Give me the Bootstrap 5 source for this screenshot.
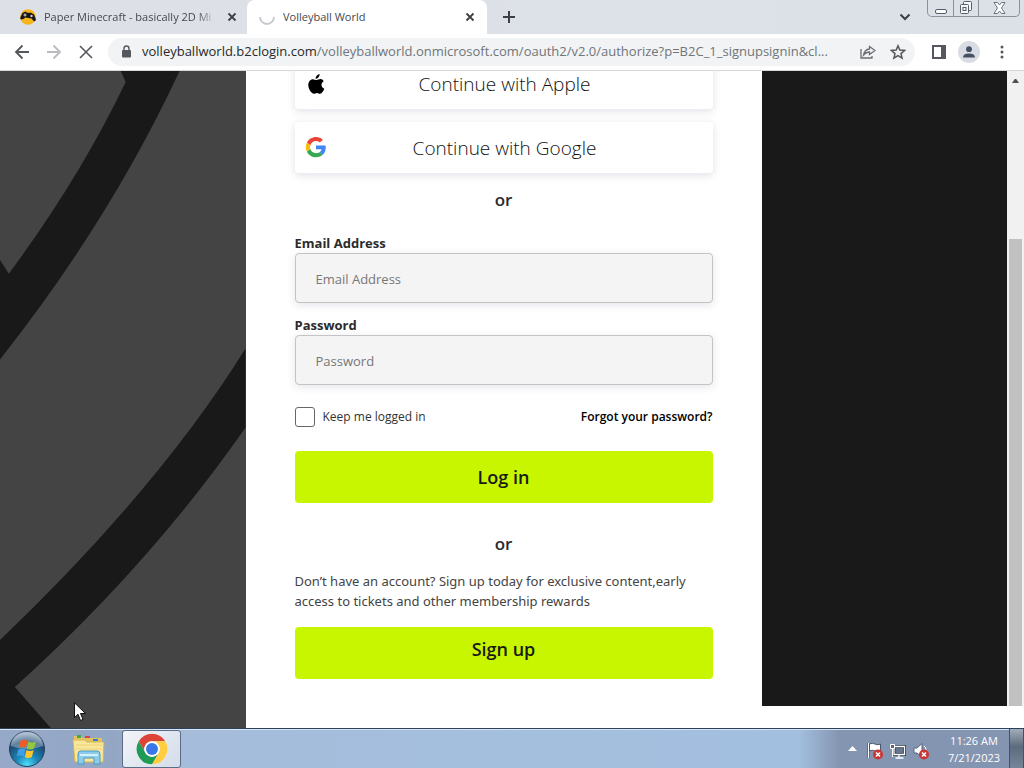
<!DOCTYPE html>
<html lang="en">
<head>
<meta charset="utf-8">
<meta name="viewport" content="width=device-width, initial-scale=1">
<title>Volleyball World</title>
<link href="https://cdn.jsdelivr.net/npm/bootstrap@5.3.0/dist/css/bootstrap.min.css" rel="stylesheet">
<style>
  body { font-family: "Open Sans", "Noto Sans", sans-serif; font-size: 13px; color: #333; background: #fff; }
  button { font-family: inherit; }
  svg { display: block; flex: none; }
  .bare { border: 0; background: none; padding: 0; color: inherit; }

  /* tab strip */
  .tabstrip { height: 34px; background: linear-gradient(90deg, #dee0e7, #dce1e8); font-size: 11px; color: #45494d; }
  .tab { width: 240px; height: 34px; gap: 8px; }
  .tab-idle { padding: 0 8px 0 20px; width: 247px; }
  .tab-idle .tab-title { -webkit-mask-image: linear-gradient(90deg, #000 88%, transparent); mask-image: linear-gradient(90deg, #000 88%, transparent); }
  .tab-live { background: #fff; border-radius: 8px 8px 0 0; padding: 0 10px 0 12px; }
  .tab-title { flex: 1; overflow: hidden; white-space: nowrap; }
  .winbtns { height: 17px; border: 1px solid #8a929c; border-top: 0; border-radius: 0 0 5px 5px; margin-right: 4px; }
  .winbtns button { width: 25px; display: flex; align-items: center; justify-content: center; }
  .winbtns button + button { border-left: 1px solid #8a929c; }
  .winbtns button:last-child { width: 41px; }

  /* toolbar */
  .toolbar { height: 37px; background: #fff; border-bottom: 1px solid #d6d8da; padding: 0 16px 0 14px; color: #55595e; }
  .omnibox { height: 28px; border-radius: 14px; background: #f1f3f4; padding: 0 5px 0 12px; margin: 0 17px 0 14px; gap: 10px; min-width: 0; }
  .address { font-size: 13px; color: #70757a; white-space: nowrap; overflow: hidden; text-overflow: ellipsis; }
  .address b { font-weight: 400; color: #26292c; }
  .avatar { width: 22px; height: 22px; border-radius: 50%; background: #d9dde3; margin-left: 12px; }

  /* page */
  .view { min-height: 0; overflow: hidden; }
  .side { flex: 1 1 0; min-width: 0; background: #444; }
  .side svg { width: 100%; height: 100%; }
  .panel { width: 516px; padding: 0 49px; background: #fff; }
  .dark { background: #191919; }
  .rest { height: 22px; }
  .social { height: 51px; border-radius: 4px; background: #fff; box-shadow: 0 2px 9px rgba(40,40,90,.15); font-size: 19px; font-weight: 300; color: #111; padding: 0 10px; margin-bottom: 13px; }
  .social.first { margin-top: -13px; }
  .social span { flex: 1; padding: 2px 20px 0 0; }
  .or { font-size: 17px; line-height: 28px; font-weight: 600; text-align: center; color: #2a2a2a; margin: 0; }
  .or-signup { margin-top: 27px; }
  .field-label { display: block; font-size: 13px; line-height: 20px; font-weight: 700; color: #2b2b2b; margin: 19px 0 0; }
  .field + .field-label { margin-top: 12px; }
  .field { height: 50px; font-size: 13px; padding: 2px 20px 0; background: #f4f4f4; border: 1px solid #c4c4c4; border-radius: 4px; box-shadow: 0 2px 8px rgba(40,40,90,.12); }
  .field::placeholder { color: #777; }
  .keep { width: 20px; height: 20px; margin: 0; border: 1px solid #666; border-radius: 3px; }
  .options { font-size: 12px; line-height: 20px; margin: 22px 0 24px; }
  .options a { font-weight: 600; }
  .lime { height: 52px; border-radius: 4px; background: #c8f500; font-size: 18px; font-weight: 600; color: #171b12; }
  .note { font-family: "Noto Sans", "Open Sans", sans-serif; font-size: 13px; line-height: 20px; color: #444; margin: 13px 0 16px; }

  /* scrollbar */
  .scroller { width: 17px; background: #f1f1f1; }
  .thumb { margin: 150px 2px 0; background: #c1c1c1; flex: 1; }

  /* taskbar */
  .taskbar { height: 40px; border-top: 1px solid #2c425c; box-shadow: inset 0 1px #dbe6f3; background: linear-gradient(90deg, #96a9c8 0, #93a6c4 115px, #a5bddb 185px, #a3bfdf 78%, #8495b1 82%, #8495b1); }
  .task-live { width: 59px; height: 38px; margin-top: 1px; border: 1px solid #5a6c87; border-radius: 3px; background: linear-gradient(135deg, #f2f5f9, #d3dce9); }
  .clock { width: 70px; font-size: 11px; line-height: 17px; color: #fff; text-align: center; white-space: nowrap; }
  .peek { width: 15px; align-self: stretch; border: 1px solid #44536a; border-width: 0 1px; background: linear-gradient(#a3acb9, #5d6b7e 45%, #77859a); }
  .pointer { left: 74px; top: 702px; pointer-events: none; }
</style>
</head>
<body class="vh-100 d-flex flex-column overflow-hidden">

<header>
  <div class="tabstrip d-flex">
    <div class="tab tab-idle d-flex align-items-center">
      <svg width="16" height="16" viewBox="0 0 16 16"><circle cx="8" cy="8" r="7.800" fill="#f6b51b"/><path d="M2.500 4 5.500 2.500l1 1 3 .5 1-.5L14 5.500l1.800 4.500q.2 2-1 2.200-1.500 0-3.300-2.700l-6-1Q3 10.500 1.500 10.500 0 10.500 .3 8.500z" fill="#161616"/><path d="M3.500 6h3M5 4.500v3" stroke="#ddd" stroke-width="1"/><circle cx="11.500" cy="7" r="1.200" fill="#ccc"/></svg>
      <span class="tab-title">Paper Minecraft - basically 2D Mi</span>
      <button class="bare" aria-label="Close tab"><svg width="14" height="14" viewBox="0 0 14 14" stroke="#3c4043" stroke-width="1.800"><path d="m3.500 3.500 7 7m0-7-7 7"/></svg></button>
    </div>
    <div class="tab tab-live d-flex align-items-center">
      <svg width="16" height="16" viewBox="0 0 16 16" fill="none" stroke="#c5c9cf" stroke-width="1.800"><path d="M1 8a7 7 0 0 0 14 0"/></svg>
      <span class="tab-title">Volleyball World</span>
      <button class="bare" aria-label="Close tab"><svg width="14" height="14" viewBox="0 0 14 14" stroke="#3c4043" stroke-width="1.800"><path d="m3.500 3.500 7 7m0-7-7 7"/></svg></button>
    </div>
    <button class="bare ms-3" aria-label="New tab"><svg width="12" height="12" viewBox="0 0 12 12" stroke="#3c4043" stroke-width="2"><path d="M6 0v12M0 6h12"/></svg></button>
    <button class="bare ms-auto me-3" aria-label="Search tabs"><svg width="12" height="8" viewBox="0 0 12 8" fill="none" stroke="#3c4043" stroke-width="2"><path d="m1.500 1.500 4.500 4.500 4.500-4.500"/></svg></button>
    <div class="winbtns d-flex">
      <button class="bare" aria-label="Minimize"><svg width="12" height="14" viewBox="0 0 12 14" fill="#fff" stroke="#555d68"><rect x=".5" y="8.500" width="11" height="4" rx="1.500"/></svg></button>
      <button class="bare" aria-label="Restore"><svg width="14" height="14" viewBox="0 0 14 14" fill="#f4f6f8" stroke="#555d68"><rect x="4.500" y=".5" width="8" height="9" rx="1"/><rect x="1.500" y="3.500" width="8" height="9" rx="1"/><rect x="4" y="6.500" width="3" height="3"/></svg></button>
      <button class="bare" aria-label="Close"><svg width="13" height="12" viewBox="0 0 13 12" fill="#fff" stroke="#69717c"><path d="M1 .5h3.500l2 2.500 2-2.500H12L8.500 6l3.500 5.500H8.500l-2-2.500-2 2.500H1L4.500 6z"/></svg></button>
    </div>
  </div>

  <div class="toolbar d-flex align-items-center">
    <button class="bare" aria-label="Back"><svg width="16" height="16" viewBox="0 0 16 16" fill="none" stroke="#54575b" stroke-width="1.800"><path d="M15 8H2m6.500-6.500L2 8l6.500 6.500"/></svg></button>
    <button class="bare ms-3" aria-label="Forward"><svg width="16" height="16" viewBox="0 0 16 16" fill="none" stroke="#b9bbbe" stroke-width="1.800"><path d="M1 8h13M7.500 1.500 14 8l-6.500 6.500"/></svg></button>
    <button class="bare ms-3" aria-label="Stop"><svg width="16" height="16" viewBox="0 0 16 16" stroke="#54575b" stroke-width="1.600"><path d="m2 2 12 12M14 2 2 14"/></svg></button>
    <div class="omnibox d-flex flex-fill align-items-center">
      <svg width="12" height="14" viewBox="0 0 12 14"><rect x="2" y="5" width="9" height="7.500" rx="1" fill="#54575b"/><path d="M4 5.500V3.500a2.500 2.500 0 0 1 5 0v2" fill="none" stroke="#54575b" stroke-width="1.400"/></svg>
      <div class="address flex-fill" role="textbox" aria-label="Address"><b>volleyballworld.b2clogin.com</b>/volleyballworld.onmicrosoft.com/oauth2/v2.0/authorize?p=B2C_1_signupsignin&amp;cl...</div>
      <button class="bare" aria-label="Share"><svg width="16" height="14" viewBox="0 0 16 14" fill="none" stroke="#6a6e73" stroke-width="1.300"><path d="M1 4v9h11v-2M9.500 1.500 15 5.500l-5.500 4V7Q6 7 3.500 10 4.500 4.500 9.500 4z"/></svg></button>
      <button class="bare ms-1 me-1" aria-label="Bookmark"><svg width="16" height="16" viewBox="0 0 16 16" fill="none" stroke="#54575b" stroke-width="1.500"><path d="m8 1.800 1.800 4.300 4.700.4L11 9.600l1.100 4.500L8 11.700l-4.100 2.400L5 9.600 1.500 6.500l4.700-.4z"/></svg></button>
    </div>
    <button class="bare" aria-label="Side panel"><svg width="14" height="14" viewBox="0 0 14 14"><path d="M1 1h12v12H1z" fill="none" stroke="#54575b" stroke-width="2"/><path d="M9 1h4v12H9z" fill="#54575b"/></svg></button>
    <button class="bare avatar" aria-label="Profile"><svg class="mx-auto" width="14" height="14" viewBox="0 0 14 14" fill="#434f63"><circle cx="7" cy="4.200" r="2.900"/><path d="M1 12.500q0-4 6-4t6 4z"/></svg></button>
    <button class="bare ms-3" aria-label="Menu"><svg width="12" height="14" viewBox="-4 0 12 14" fill="#54575b"><circle cx="2" cy="2" r="1.500"/><circle cx="2" cy="7" r="1.500"/><circle cx="2" cy="12" r="1.500"/></svg></button>
  </div>
</header>

<main class="view flex-fill d-flex">
  <div class="side">
    <svg viewBox="0 0 246 658" preserveAspectRatio="xMaxYMin slice" fill="#191919" aria-hidden="true">
      <path d="M121 0 126 11Q80 107 9 203L0 189V289Q110 150 180 0z"/>
      <path d="M246 278Q159 418 0 570V658H51L15 617Q150 495 246 357z"/>
    </svg>
  </div>

  <section class="panel">
    <button class="bare social first w-100 d-flex align-items-center">
      <svg width="22" height="22" viewBox="0 0 22 22"><path fill="#000" d="M14.600 1c.1 1.500-.5 2.700-1.300 3.500-.8.900-1.800 1.300-2.700 1.200-.1-1.300.5-2.500 1.300-3.300C12.700 1.600 13.700 1.100 14.600 1zM18.700 8.300c-1.600 1-2.300 2.200-2.200 3.800.1 1.800 1.100 3 2.800 3.700-.8 2.300-2.500 4.900-4.200 4.900-1.200 0-1.700-.8-3.100-.8s-2 .8-3.100.8C6.300 20.700 3.300 15.800 3.300 12c0-3.600 2.200-5.800 4.600-5.800 1.500 0 2.500.9 3.700.9 1.100 0 2.100-1 4-1 1.200 0 2.300.8 3.100 2.200z"/></svg>
      <span>Continue with Apple</span>
    </button>
    <button class="bare social w-100 d-flex align-items-center">
      <svg width="22" height="22" viewBox="-2 0 52 52"><path fill="#EA4335" d="M24 9.500c3.540 0 6.710 1.220 9.210 3.600l6.850-6.850C35.900 2.380 30.470 0 24 0 14.620 0 6.510 5.380 2.560 13.220l7.980 6.190C12.430 13.720 17.740 9.500 24 9.500z"/><path fill="#4285F4" d="M46.980 24.550c0-1.570-.15-3.090-.38-4.550H24v9.020h12.940c-.58 2.960-2.260 5.480-4.780 7.180l7.730 6c4.510-4.180 7.090-10.360 7.090-17.650z"/><path fill="#FBBC05" d="M10.530 28.590c-.48-1.450-.76-2.990-.76-4.590s.27-3.140.76-4.590l-7.980-6.190C.92 16.460 0 20.120 0 24s.92 7.540 2.560 10.780z"/><path fill="#34A853" d="M24 48c6.480 0 11.930-2.130 15.890-5.810l-7.730-6c-2.150 1.450-4.920 2.300-8.160 2.300-6.260 0-11.570-4.220-13.470-9.910l-7.980 6.190C6.510 42.620 14.620 48 24 48z"/></svg>
      <span>Continue with Google</span>
    </button>
    <p class="or">or</p>
    <form onsubmit="return false">
      <label class="field-label" for="email">Email Address</label>
      <input class="field form-control" id="email" type="email" placeholder="Email Address">
      <label class="field-label" for="pass">Password</label>
      <input class="field form-control" id="pass" type="password" placeholder="Password">
      <div class="options d-flex align-items-center">
        <input class="keep form-check-input" id="keep" type="checkbox">
        <label class="ms-2" for="keep">Keep me logged in</label>
        <a class="ms-auto text-black text-decoration-none" href="#">Forgot your password?</a>
      </div>
      <button class="bare lime w-100">Log in</button>
    </form>
    <p class="or or-signup">or</p>
    <p class="note">Don’t have an account? Sign up today for exclusive content,early access to tickets and other membership rewards</p>
    <button class="bare lime w-100 pb-2">Sign up</button>
  </section>

  <div class="flex-fill d-flex flex-column" style="flex-basis: 17px !important">
    <div class="flex-fill d-flex">
      <div class="dark flex-fill"></div>
      <div class="scroller d-flex flex-column">
        <svg class="mx-auto mt-2" width="7" height="10" viewBox="0 0 7 10"><path d="M3.500 -1 7 4H0z" fill="#505050"/></svg>
        <div class="thumb"></div>
      </div>
    </div>
    <div class="rest"></div>
  </div>
</main>

<footer class="taskbar d-flex align-items-center">
  <button class="bare ms-2" aria-label="Start">
    <svg width="38" height="38" viewBox="0 0 38 38"><defs><radialGradient id="orb" cx=".5" cy=".95" r=".9"><stop offset="0" stop-color="#4fe0fb"/><stop offset=".35" stop-color="#1c86b8"/><stop offset=".75" stop-color="#1f4b73"/><stop offset="1" stop-color="#8fa9c2"/></radialGradient></defs><circle cx="19" cy="19" r="17.500" fill="url(#orb)" stroke="#253f5c"/><path d="M3 16a16 14.500 0 0 1 32 0q-16 6-32 0z" fill="#fff" opacity=".3"/><path d="M12.500 11q4-2.300 7 0l-1.700 7q-3.300-2-7 0z" fill="#ee5b25"/><path d="M20.500 11.500q3.500 2 7.500 0l-2 7q-3.500 2-7.200 0z" fill="#93c83e"/><path d="M10.300 19.500q3.700-2 7.200 0l-1.800 7q-3.300-2-7 0z" fill="#3f9fe5"/><path d="M18.500 20q3.500 2 7.200 0l-1.900 7q-3.500 2-7 0z" fill="#fdc52c"/></svg>
  </button>
  <button class="bare ms-4 me-3" aria-label="File Explorer">
    <svg width="36" height="32" viewBox="-1 0 36 32"><path d="M3 3h7l2 2h19v22H3z" fill="#e2c35c"/><path d="M6 2h4v3H6z" fill="#46a845"/><path d="M14 3h5v2h-5z" fill="#d44"/><path d="M22 6h5v2h-5z" fill="#3c79cf"/><path d="M2 7h12l2 2h17l-1 20H4z" fill="#f8e79b" stroke="#d4b65a"/><path d="M5 12h26M5 16h26" stroke="#eed276"/><path d="M7 31V21q0-3 3-3h16q3 0 3 3v10h-6v-6H13v6z" fill="#8dcbea" stroke="#4b9bc6"/><path d="M9 22h18" stroke="#d5f1fc" stroke-width="2"/></svg>
  </button>
  <button class="bare task-live" aria-label="Google Chrome">
    <svg class="mx-auto" width="32" height="32" viewBox="0 0 48 48"><circle cx="24" cy="24" r="23" fill="#fff"/><path d="M4.080 12.500A23 23 0 0 1 43.920 12.500H24A11.500 11.500 0 0 0 14.040 29.750z" fill="#db4437"/><path d="M43.920 12.500A23 23 0 0 1 24 47L33.960 29.750A11.500 11.500 0 0 0 24 12.500z" fill="#ffcd40"/><path d="M24 47A23 23 0 0 1 4.080 12.500L14.040 29.750A11.500 11.500 0 0 0 33.960 29.750z" fill="#1e9b54"/><circle cx="24" cy="24" r="11.500" fill="#fff"/><circle cx="24" cy="24" r="9" fill="#3b78e7"/></svg>
  </button>
  <div class="ms-auto d-flex align-items-center">
    <button class="bare" aria-label="Show hidden icons"><svg width="9" height="6" viewBox="0 0 9 6"><path d="M4.500 0 9 5H0z" fill="#fff"/></svg></button>
    <svg class="ms-2 mx-1 mt-1" width="20" height="18" viewBox="0 0 20 18"><path d="M3.500 1v15" stroke="#354052" stroke-width="3"/><path d="M3.500 1v15" stroke="#fff" stroke-width="1.500"/><path d="M4.500 2q3-1.500 5.500 0t5.500 0v7q-3 1.500-5.500 0t-5.500 0z" fill="#fff" stroke="#4a566a"/><circle cx="13" cy="12.500" r="5" fill="#cc3434"/><path d="m11 10.500 4 4m0-4-4 4" stroke="#fff" stroke-width="1.600"/></svg>
    <svg class="mt-1" width="18" height="18" viewBox="0 0 18 18"><path d="M5 4.500h10.500v8H5z" fill="#66758c" stroke="#2f3949" stroke-width="3"/><path d="M5 4.500h10.500v8H5zM10 13v3M6.500 16h8" fill="none" stroke="#fff" stroke-width="1.300"/><path d="M1.500 2.500h4v4h-4zM3.500 6.500V15" fill="#59677d" stroke="#fff"/></svg>
    <svg class="mx-1 mt-1" width="20" height="18" viewBox="0 0 20 18"><path d="M3 6h3l5-4.500v14L6 11H3z" fill="#fff" stroke="#56647b"/><path d="M13 4q2 1 2 4" fill="none" stroke="#fff"/><circle cx="13" cy="12.500" r="5" fill="#cc3434"/><path d="m11 10.500 4 4m0-4-4 4" stroke="#fff" stroke-width="1.600"/></svg>
    <div class="clock ms-1">11:26 AM<br>7/21/2023</div>
  </div>
  <button class="bare peek" aria-label="Show desktop"></button>
</footer>

<svg class="pointer position-absolute" width="13" height="20" viewBox="0 0 13 20"><path d="M.5.800V15.500L4 12.300 6.500 18.500 9 17.400 6.500 11.500H11.500z" fill="#fff" stroke="#111"/></svg>

<script src="https://cdn.jsdelivr.net/npm/bootstrap@5.3.0/dist/js/bootstrap.bundle.min.js"></script>
</body>
</html>
